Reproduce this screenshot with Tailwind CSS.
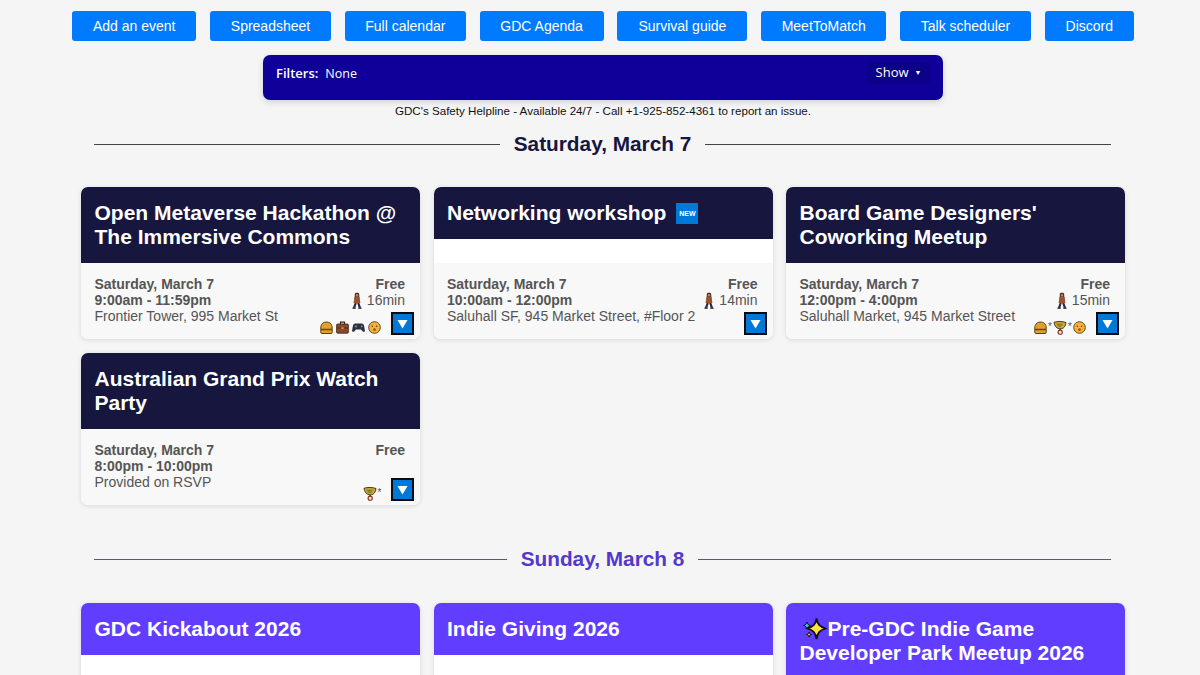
<!DOCTYPE html>
<html lang="en">
<head>
<meta charset="utf-8">
<script src="https://cdn.jsdelivr.net/npm/@tailwindcss/browser@4"></script>
</head>
<body class="bg-[#f5f5f5] font-['Liberation_Sans',Arial,sans-serif]">
<svg class="hidden" width="0" height="0">
  <symbol id="walk" viewBox="0 0 10 17">
    <path d="M2.800 2C2.800 .4 7.200 .4 7.200 2V8H2.800z" fill="#4f2c1c"/><path d="M3.900 2.200h2.200v2.200H3.900z" fill="#c98a5e"/><path d="M2.400 4.800h5.200l.8 6.200H1.600z" fill="#9c5130"/><path d="M2.600 11L.9 15.800h2.400L4.800 11zM5.200 11l1.500 4.800h2.400L7.400 11z" fill="#262d48"/><path d="M.5 15.500h3.200v1.300H.5zM6.300 15.500h3.200v1.300H6.300z" fill="#12121c"/>
  </symbol>
  <symbol id="burger" viewBox="0 0 13 13">
    <path d="M.8 11.500V7C.8 3.300 3.200 1 6.500 1s5.700 2.300 5.700 6v4.500c0 .6-.4 1-1 1H1.800c-.6 0-1-.4-1-1z" fill="#e3a02a" stroke="#4a3008" stroke-width=".9"/><path d="M1 7.800h11v1.400H1z" fill="#6e4212"/>
  </symbol>
  <symbol id="case" viewBox="0 0 13 13">
    <path d="M4.500 3V1.200h4V3" fill="none" stroke="#3a2015" stroke-width="1.200"/><rect x=".6" y="3" width="11.800" height="9.200" rx="1" fill="#8c4a2b" stroke="#3a2015" stroke-width=".8"/><path d="M1 7h11" stroke="#3a2015" stroke-width=".8"/><rect x="5.500" y="6.200" width="2" height="1.800" fill="#d9a45c"/>
  </symbol>
  <symbol id="pad" viewBox="0 0 13 13">
    <path d="M3.300 2.400h6.400c1.400 0 2.100 1 2.500 2.800l.7 4.200c.2 1.500-1.500 1.900-2.400.9L9 8.500H4l-1.500 1.800c-.9 1-2.600.6-2.400-.9l.7-4.200c.4-1.800 1.100-2.800 2.500-2.800z" fill="#2c3340"/><path d="M2.800 5.400h2.400M4 4.200v2.400" stroke="#9aa3b5" stroke-width=".7"/><circle cx="9.700" cy="5.400" r=".8" fill="#9aa3b5"/>
  </symbol>
  <symbol id="face" viewBox="0 0 13 13">
    <circle cx="6.500" cy="6.500" r="5.800" fill="#f2b53a" stroke="#5a3a0a" stroke-width=".9"/><circle cx="4.400" cy="5.300" r=".8" fill="#5a3a0a"/><circle cx="8.600" cy="5.300" r=".8" fill="#5a3a0a"/><circle cx="6.500" cy="8.700" r="1.400" fill="#b5491e"/>
  </symbol>
  <symbol id="trophy" viewBox="0 0 14 15">
    <path d="M1 2.300C4.500 1 9.500 1.200 13 2.500c-.3 3.400-2 5.800-4.600 6.300H6C3.200 8 1.300 5.600 1 2.300z" fill="#c9a63a" stroke="#3f2f0a" stroke-width=".9"/><path d="M3.200 3.300l6.800.4-2.300 3.300H5.500z" fill="#7c8a35"/><path d="M7.200 8.800v1.400" stroke="#3f2f0a" stroke-width="1.200"/><circle cx="7.200" cy="12.200" r="2.100" fill="#f4e9d8" stroke="#8a2f1e" stroke-width="1.100"/>
  </symbol>
  <symbol id="drop" viewBox="0 0 23 23">
    <rect x="1" y="1" width="21" height="21" fill="#0078d7" stroke="#0b0b14" stroke-width="2"/><path d="M6.500 8h10l-5 8.500z" fill="#fff"/>
  </symbol>
</svg>

<div class="h-[675px] w-[1206px] overflow-hidden">
<nav class="flex justify-center gap-[13.800px] pt-[11px] text-[14px] text-white">
  <a class="flex h-[30px] w-[124px] items-center justify-center rounded-[3px] bg-[#007bff]">Add an event</a>
  <a class="flex h-[30px] w-[121px] items-center justify-center rounded-[3px] bg-[#007bff]">Spreadsheet</a>
  <a class="flex h-[30px] w-[121px] items-center justify-center rounded-[3px] bg-[#007bff]">Full calendar</a>
  <a class="flex h-[30px] w-[124px] items-center justify-center rounded-[3px] bg-[#007bff]">GDC Agenda</a>
  <a class="flex h-[30px] w-[130px] items-center justify-center rounded-[3px] bg-[#007bff]">Survival guide</a>
  <a class="flex h-[30px] w-[125px] items-center justify-center rounded-[3px] bg-[#007bff]">MeetToMatch</a>
  <a class="flex h-[30px] w-[131px] items-center justify-center rounded-[3px] bg-[#007bff]">Talk scheduler</a>
  <a class="flex h-[30px] w-[89px] items-center justify-center rounded-[3px] bg-[#007bff]">Discord</a>
</nav>

<div class="mx-auto mt-[14px] flex h-[45px] w-[680px] items-center justify-between rounded-[7px] bg-[#10009a] px-[13px] font-['Open_Sans',sans-serif] text-white shadow-[0_2px_6px_rgba(0,0,0,0.15)]">
  <div class="flex items-baseline gap-[7px] pb-[8px]"><b class="text-[13px] font-semibold">Filters:</b><span class="text-[12.5px]">None</span></div>
  <div class="mb-[9px] flex h-[22px] w-[63px] items-center justify-center gap-[6px] rounded-[4px] bg-[#0d0088] text-[13px]">Show<span class="text-[7px]">▼</span></div>
</div>

<p class="mt-[3px] text-center text-[11.600px] leading-[15px] text-[#111]">GDC's Safety Helpline - Available 24/7 - Call +1-925-852-4361 to report an issue.</p>

<div class="ml-[94px] mr-[95px] mt-[12px] flex h-[28px] items-center gap-[14px] text-[#16163f]">
  <div class="h-px flex-1 bg-[#444]"></div>
  <h2 class="text-[20.800px] font-bold leading-[28px]">Saturday, March 7</h2>
  <div class="h-px flex-1 bg-[#444]"></div>
</div>

<section class="ml-[81px] mt-[29px] grid w-[1045px] grid-cols-[339px_339px_339px] gap-x-[13.500px] gap-y-[14px]">
  <article class="flex h-[152px] flex-col overflow-hidden rounded-[7px] bg-white shadow-[0_1px_5px_rgba(0,0,0,0.12)]">
    <h3 class="h-[76px] bg-[#16163f] px-[13.500px] pt-[14px] text-[21px] font-bold leading-[24px] text-white">Open Metaverse Hackathon @ The Immersive Commons</h3>
    <div class="relative flex-1 bg-[#f8f8f8] pl-[13.500px] pr-[15px] pt-[13px] text-[14px] leading-[16px] text-[#555]">
      <div class="flex justify-between"><b>Saturday, March 7</b><b>Free</b></div>
      <div class="flex justify-between"><b>9:00am - 11:59pm</b><span class="flex items-center gap-[5px]"><svg class="-my-px h-[17px] w-[10px]"><use href="#walk"/></svg>16min</span></div>
      <div>Frontier Tower, 995 Market St</div>
      <div class="absolute bottom-[4px] right-[6px] flex items-center gap-[10px]">
        <span class="mt-[7px] flex gap-[3px]"><svg class="h-[13px] w-[13px]"><use href="#burger"/></svg><svg class="h-[13px] w-[13px]"><use href="#case"/></svg><svg class="h-[13px] w-[13px]"><use href="#pad"/></svg><svg class="h-[13px] w-[13px]"><use href="#face"/></svg></span>
        <svg class="h-[23px] w-[23px]"><use href="#drop"/></svg>
      </div>
    </div>
  </article>

  <article class="flex h-[152px] flex-col overflow-hidden rounded-[7px] bg-white shadow-[0_1px_5px_rgba(0,0,0,0.12)]">
    <h3 class="flex h-[52px] items-start gap-[10px] bg-[#16163f] px-[13.500px] pt-[14px] text-[21px] font-bold leading-[24px] text-white">Networking workshop
      <span class="mt-[2px] flex h-[21px] w-[22px] items-center justify-center bg-[#0078d7] text-[7px] font-bold leading-none">NEW</span>
    </h3>
    <div class="h-[24px] bg-white"></div>
    <div class="relative flex-1 bg-[#f8f8f8] pl-[13.500px] pr-[15px] pt-[13px] text-[14px] leading-[16px] text-[#555]">
      <div class="flex justify-between"><b>Saturday, March 7</b><b>Free</b></div>
      <div class="flex justify-between"><b>10:00am - 12:00pm</b><span class="flex items-center gap-[5px]"><svg class="-my-px h-[17px] w-[10px]"><use href="#walk"/></svg>14min</span></div>
      <div>Saluhall SF, 945 Market Street, #Floor 2</div>
      <div class="absolute bottom-[4px] right-[6px] flex items-center">
        <svg class="h-[23px] w-[23px]"><use href="#drop"/></svg>
      </div>
    </div>
  </article>

  <article class="flex h-[152px] flex-col overflow-hidden rounded-[7px] bg-white shadow-[0_1px_5px_rgba(0,0,0,0.12)]">
    <h3 class="h-[76px] bg-[#16163f] px-[13.500px] pt-[14px] text-[21px] font-bold leading-[24px] text-white">Board Game Designers' Coworking Meetup</h3>
    <div class="relative flex-1 bg-[#f8f8f8] pl-[13.500px] pr-[15px] pt-[13px] text-[14px] leading-[16px] text-[#555]">
      <div class="flex justify-between"><b>Saturday, March 7</b><b>Free</b></div>
      <div class="flex justify-between"><b>12:00pm - 4:00pm</b><span class="flex items-center gap-[5px]"><svg class="-my-px h-[17px] w-[10px]"><use href="#walk"/></svg>15min</span></div>
      <div>Saluhall Market, 945 Market Street</div>
      <div class="absolute bottom-[4px] right-[6px] flex items-center gap-[10px]">
        <span class="mt-[7px] flex items-center"><svg class="h-[13px] w-[13px]"><use href="#burger"/></svg><span class="w-[6px] text-center text-[10px]">*</span><svg class="h-[15px] w-[14px]"><use href="#trophy"/></svg><span class="w-[6px] text-center text-[10px]">*</span><svg class="h-[13px] w-[13px]"><use href="#face"/></svg></span>
        <svg class="h-[23px] w-[23px]"><use href="#drop"/></svg>
      </div>
    </div>
  </article>

  <article class="flex h-[152px] flex-col overflow-hidden rounded-[7px] bg-white shadow-[0_1px_5px_rgba(0,0,0,0.12)]">
    <h3 class="h-[76px] bg-[#16163f] px-[13.500px] pt-[14px] text-[21px] font-bold leading-[24px] text-white">Australian Grand Prix Watch Party</h3>
    <div class="relative flex-1 bg-[#f8f8f8] pl-[13.500px] pr-[15px] pt-[13px] text-[14px] leading-[16px] text-[#555]">
      <div class="flex justify-between"><b>Saturday, March 7</b><b>Free</b></div>
      <div><b>8:00pm - 10:00pm</b></div>
      <div>Provided on RSVP</div>
      <div class="absolute bottom-[4px] right-[6px] flex items-center gap-[9px]">
        <span class="mt-[7px] flex items-center"><svg class="h-[15px] w-[14px]"><use href="#trophy"/></svg><span class="w-[5px] text-center text-[10px]">*</span></span>
        <svg class="h-[23px] w-[23px]"><use href="#drop"/></svg>
      </div>
    </div>
  </article>
</section>

<div class="ml-[94px] mr-[95px] mt-[40px] flex h-[28px] items-center gap-[14px] text-[#5238cc]">
  <div class="h-px flex-1 bg-[#5b48d0]"></div>
  <h2 class="text-[20.800px] font-bold leading-[28px]">Sunday, March 8</h2>
  <div class="h-px flex-1 bg-[#5b48d0]"></div>
</div>

<section class="ml-[81px] mt-[30px] grid w-[1045px] grid-cols-[339px_339px_339px] gap-x-[13.500px]">
  <article class="flex h-[152px] flex-col overflow-hidden rounded-[7px] bg-white shadow-[0_1px_5px_rgba(0,0,0,0.12)]">
    <h3 class="h-[52px] bg-[#613dff] px-[13.500px] pt-[14px] text-[21px] font-bold leading-[24px] text-white">GDC Kickabout 2026</h3>
    <div class="h-[24px] bg-white"></div>
    <div class="flex-1 bg-[#f8f8f8]"></div>
  </article>
  <article class="flex h-[152px] flex-col overflow-hidden rounded-[7px] bg-white shadow-[0_1px_5px_rgba(0,0,0,0.12)]">
    <h3 class="h-[52px] bg-[#613dff] px-[13.500px] pt-[14px] text-[21px] font-bold leading-[24px] text-white">Indie Giving 2026</h3>
    <div class="h-[24px] bg-white"></div>
    <div class="flex-1 bg-[#f8f8f8]"></div>
  </article>
  <article class="flex h-[152px] flex-col overflow-hidden rounded-[7px] bg-white shadow-[0_1px_5px_rgba(0,0,0,0.12)]">
    <h3 class="h-[76px] bg-[#613dff] px-[13.500px] pt-[14px] text-[21px] font-bold leading-[24px] text-white"><svg class="mr-[1px] inline-block h-[24px] w-[27px] align-[-5px]" viewBox="0 0 26 24"><path d="M16 1.500c1 5.800 3 8 9 10-6 2-8 4.200-9 10.500-1-6.300-3-8.500-9-10.500 6-2 8-4.200 9-10z" fill="#ffe53b" stroke="#111" stroke-width="1.800"/><path d="M6.500 5c.5 2 1.500 3 3.500 3.500C8 9 7 10 6.500 12 6 10 5 9 3 8.500 5 8 6 7 6.500 5z" fill="#39b8e0" stroke="#111"/><path d="M8.500 15c.3 1.500 1 2.200 2.500 2.500-1.500.3-2.200 1-2.500 2.500-.3-1.500-1-2.200-2.500-2.500 1.500-.3 2.200-1 2.500-2.500z" fill="#e9a0c8" stroke="#111"/></svg>Pre-GDC Indie Game Developer Park Meetup 2026</h3>
    <div class="flex-1 bg-[#f8f8f8]"></div>
  </article>
</section>
</div>
</body>
</html>
